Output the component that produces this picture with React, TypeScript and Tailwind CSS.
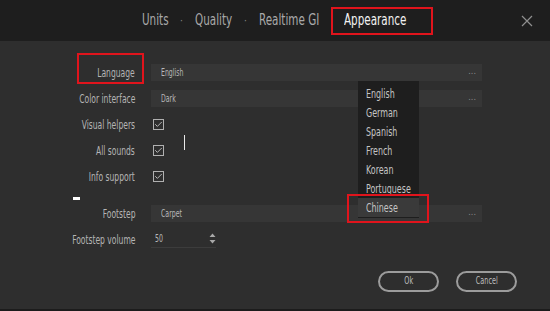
import { Check } from "lucide-react";

const FONT = "font-['Liberation_Sans_Narrow','DejaVu_Sans_Condensed','Liberation_Sans',sans-serif]";

const LANGS = ["English", "German", "Spanish", "French", "Korean", "Portuguese", "Chinese"];

function Label({ text }: { text: string }) {
  return (
    <div className="w-[136px] pr-[1px] text-right shrink-0 whitespace-nowrap">
      <span className="inline-block origin-right scale-x-[0.65] text-[13px] text-[#b4b4b4]">{text}</span>
    </div>
  );
}

function Field({ value }: { value: string }) {
  return (
    <div className="ml-[15px] w-[331px] h-[17px] bg-[#363636] flex items-center justify-between pl-[10px] pr-[6px]">
      <span className="inline-block origin-left scale-x-[0.69] text-[10px] text-[#b8b8b8]">{value}</span>
      <span className="text-[9px] text-[#8a8a8a] leading-none pb-[2px]">...</span>
    </div>
  );
}

function Box() {
  return (
    <div className="ml-[17px] w-[11px] h-[11px] border border-[#b0b0b0] flex items-center justify-center">
      <Check className="w-[9px] h-[9px] text-[#c0c0c0]" strokeWidth={2.5} />
    </div>
  );
}

function Tab({ text, w, active }: { text: string; w: string; active?: boolean }) {
  return (
    <div className={`${w} shrink-0 whitespace-nowrap`}>
      <span className={`inline-block origin-left scale-x-[0.77] ${active ? "text-[#f2f2f2]" : "text-[#a9a9a9]"}`}>{text}</span>
    </div>
  );
}

function Dot() {
  return <div className="w-[27px] shrink-0 text-center text-[10px] text-[#8a8a8a]">·</div>;
}

export default function App() {
  return (
    <div className={`${FONT} relative w-[550px] h-[311px] bg-[#2e2e2e] flex flex-col overflow-hidden`}>
      {/* header */}
      <div className="h-[41px] bg-[#1e1e1e] flex items-center shrink-0">
        <div className="flex items-center pl-[142px] text-[15px]">
          <Tab text="Units" w="w-[26px]" />
          <Dot />
          <Tab text="Quality" w="w-[37px]" />
          <Dot />
          <Tab text="Realtime GI" w="w-[59px]" />
          <div className="ml-[13px] w-[102px] h-[28px] border-2 border-[#e0141c] flex items-center pl-[11px]">
            <Tab text="Appearance" w="w-[62px]" active />
          </div>
        </div>
        <svg className="ml-auto mr-[17px] w-[12px] h-[12px]" viewBox="0 0 12 12">
          <path d="M1 1 L11 11 M11 1 L1 11" stroke="#8f8f8f" strokeWidth="1.2" />
        </svg>
      </div>

      {/* body */}
      <div className="flex flex-col pt-[18px]">
        <div className="relative h-[26px] flex items-center">
          <Label text="Language" />
          <Field value="English" />
          <span className="absolute left-[77px] w-[67px] top-[-6px] h-[31px] border-2 border-[#e0141c]" />
        </div>
        <div className="h-[26px] flex items-center">
          <Label text="Color interface" />
          <Field value="Dark" />
        </div>
        <div className="h-[26px] flex items-center">
          <Label text="Visual helpers" />
          <Box />
        </div>
        <div className="h-[26px] flex items-center">
          <Label text="All sounds" />
          <Box />
        </div>
        <div className="h-[26px] flex items-center">
          <Label text="Info support" />
          <Box />
        </div>
        <div className="h-[11px]" />
        <div className="h-[26px] flex items-center">
          <Label text="Footstep" />
          <Field value="Carpet" />
        </div>
        <div className="h-[26px] flex items-center">
          <Label text="Footstep volume" />
          <div className="ml-[15px] w-[65px] h-[17px] border-b border-[#3c3c3c] flex items-center justify-between pl-[4px]">
            <span className="inline-block origin-left scale-x-[0.69] text-[10px] text-[#b8b8b8]">50</span>
            <svg className="w-[7px] h-[11px]" viewBox="0 0 7 11">
              <path d="M3.5 0.5 L6.5 4 L0.5 4 Z M3.5 10.5 L6.5 7 L0.5 7 Z" fill="#a8a8a8" />
            </svg>
          </div>
        </div>
      </div>

      <div className="flex-1" />
      <div className="flex justify-end gap-[17px] pr-[33px] pb-[17px]">
        <button className="w-[61px] h-[21px] rounded-full border-2 border-[#9c9c9c] text-[11px] text-[#bdbdbd]">
          <span className="inline-block scale-x-[0.65]">Ok</span>
        </button>
        <button className="w-[61px] h-[21px] rounded-full border-2 border-[#9c9c9c] text-[11px] text-[#bdbdbd]">
          <span className="inline-block scale-x-[0.65]">Cancel</span>
        </button>
      </div>
      <div className="h-[2px] bg-[#1c1c1c] shrink-0" />

      {/* stray marks */}
      <div className="absolute left-[184px] top-[135px] w-[1px] h-[15px] bg-[#e8e8e8]" />
      <div className="absolute left-[73px] top-[197px] w-[7px] h-[3px] bg-white" />

      {/* dropdown */}
      <div className="absolute left-[358px] top-[81px] w-[61px] bg-[#1e1e1e] pt-[3px] pb-[1px]">
        {LANGS.map((l) => (
          <div
            key={l}
            className={`relative h-[19px] flex items-center pl-[8px] whitespace-nowrap text-[13px] text-[#c4c4c4] ${l === "Chinese" ? "bg-[#3a3a3a]" : ""}`}
          >
            <span className="inline-block origin-left scale-x-[0.68]">{l}</span>
            {l === "Chinese" && (
              <span className="absolute left-[-11px] right-[-10px] top-[-4px] bottom-[-6px] border-2 border-[#e0141c]" />
            )}
          </div>
        ))}
      </div>
    </div>
  );
}
